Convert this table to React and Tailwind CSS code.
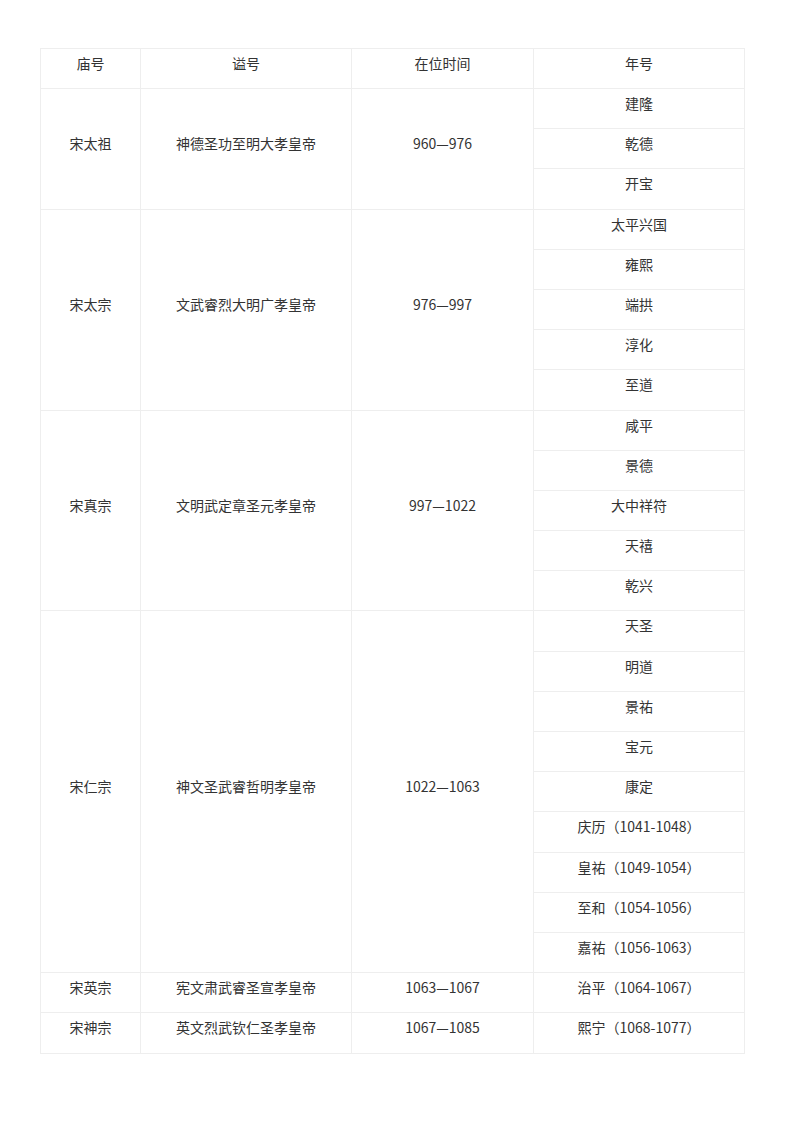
import React from "react";

const groups = [
  { miao: "宋太祖", shi: "神德圣功至明大孝皇帝", time: "960—976", nian: ["建隆", "乾德", "开宝"] },
  { miao: "宋太宗", shi: "文武睿烈大明广孝皇帝", time: "976—997", nian: ["太平兴国", "雍熙", "端拱", "淳化", "至道"] },
  { miao: "宋真宗", shi: "文明武定章圣元孝皇帝", time: "997—1022", nian: ["咸平", "景德", "大中祥符", "天禧", "乾兴"] },
  {
    miao: "宋仁宗",
    shi: "神文圣武睿哲明孝皇帝",
    time: "1022—1063",
    nian: ["天圣", "明道", "景祐", "宝元", "康定", "庆历（1041-1048）", "皇祐（1049-1054）", "至和（1054-1056）", "嘉祐（1056-1063）"],
  },
  { miao: "宋英宗", shi: "宪文肃武睿圣宣孝皇帝", time: "1063—1067", nian: ["治平（1064-1067）"] },
  { miao: "宋神宗", shi: "英文烈武钦仁圣孝皇帝", time: "1067—1085", nian: ["熙宁（1068-1077）"] },
];

const base = "border border-[#eeeeee] text-center align-middle p-0 leading-[20px] pt-[4px]";
const head = base + " pb-[15px]";
const cell = base + " pb-[15.2px]";

export default function App() {
  return (
    <div className="w-[800px] min-h-[1131px] bg-white pt-[48px] pl-[40px]" style={{ fontFamily: '"Noto Sans CJK SC", "Noto Sans", sans-serif' }}>
      <table className="border-collapse w-[704px] table-fixed text-[14px] text-[#333333]">
        <colgroup>
          <col className="w-[100px]" />
          <col className="w-[211px]" />
          <col className="w-[182px]" />
          <col className="w-[211px]" />
        </colgroup>
        <tbody>
          <tr>
            <td className={head}>庙号</td>
            <td className={head}>谥号</td>
            <td className={head}>在位时间</td>
            <td className={head}>年号</td>
          </tr>
          {groups.map((g) =>
            g.nian.map((n, i) => (
              <tr key={g.miao + n}>
                {i === 0 && (
                  <>
                    <td className={cell} rowSpan={g.nian.length}>{g.miao}</td>
                    <td className={cell} rowSpan={g.nian.length}>{g.shi}</td>
                    <td className={cell} rowSpan={g.nian.length}>{g.time}</td>
                  </>
                )}
                <td className={cell}>{n}</td>
              </tr>
            ))
          )}
        </tbody>
      </table>
    </div>
  );
}
